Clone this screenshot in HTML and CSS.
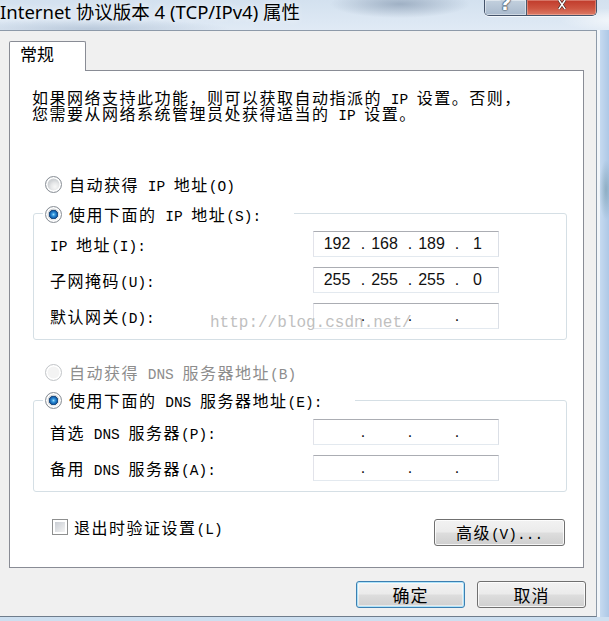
FILE: index.html
```html
<!DOCTYPE html>
<html lang="zh-CN">
<head>
<meta charset="utf-8">
<title>Internet 协议版本 4 (TCP/IPv4) 属性</title>
<link rel="stylesheet" href="styles.css">
</head>
<body>
<div class="window">
  <header class="titlebar">
    <h1 class="title">Internet 协议版本 4 (TCP/IPv4) 属性</h1>
    <div class="caption">
      <div class="cap-btn help"><span>?</span></div>
      <div class="cap-btn close">
        <svg width="22" height="10" viewBox="0 -12 22 22" aria-hidden="true">
          <path d="M4 -12 L18 8 M18 -12 L4 8" stroke="#3a2622" stroke-width="6" fill="none"/>
          <path d="M4 -12 L18 8 M18 -12 L4 8" stroke="#ffffff" stroke-width="3.4" fill="none"/>
        </svg>
      </div>
    </div>
  </header>
  <div class="frame">
    <div class="client">
      <div class="tabs"><div class="tab">常规</div></div>
      <div class="page">
        <p class="intro">如果网络支持此功能，则可以获取自动指派的<span class="m"> IP </span>设置。否则，<br>您需要从网络系统管理员处获得适当的<span class="m"> IP </span>设置。</p>

        <div class="option first"><span class="radio"></span><span>自动获得<span class="m"> IP </span>地址<span class="m">(O)</span></span></div>

        <fieldset class="group">
          <legend><span class="option"><span class="radio on"></span><span>使用下面的<span class="m"> IP </span>地址<span class="m">(S):</span></span></span></legend>
          <div class="field">
            <label><span class="m">IP </span>地址<span class="m">(I):</span></label>
            <div class="ip"><span class="oct">192</span><span class="dot">.</span><span class="oct">168</span><span class="dot">.</span><span class="oct">189</span><span class="dot">.</span><span class="oct">1</span></div>
          </div>
          <div class="field">
            <label>子网掩码<span class="m">(U):</span></label>
            <div class="ip"><span class="oct">255</span><span class="dot">.</span><span class="oct">255</span><span class="dot">.</span><span class="oct">255</span><span class="dot">.</span><span class="oct">0</span></div>
          </div>
          <div class="field">
            <label>默认网关<span class="m">(D):</span></label>
            <div class="ip"><span class="oct"></span><span class="dot">.</span><span class="oct"></span><span class="dot">.</span><span class="oct"></span><span class="dot">.</span><span class="oct"></span></div>
          </div>
        </fieldset>

        <div class="option disabled dns-auto"><span class="radio"></span><span>自动获得<span class="m"> DNS </span>服务器地址<span class="m">(B)</span></span></div>

        <fieldset class="group dns">
          <legend><span class="option"><span class="radio on"></span><span>使用下面的<span class="m"> DNS </span>服务器地址<span class="m">(E):</span></span></span></legend>
          <div class="field">
            <label>首选<span class="m"> DNS </span>服务器<span class="m">(P):</span></label>
            <div class="ip"><span class="oct"></span><span class="dot">.</span><span class="oct"></span><span class="dot">.</span><span class="oct"></span><span class="dot">.</span><span class="oct"></span></div>
          </div>
          <div class="field">
            <label>备用<span class="m"> DNS </span>服务器<span class="m">(A):</span></label>
            <div class="ip"><span class="oct"></span><span class="dot">.</span><span class="oct"></span><span class="dot">.</span><span class="oct"></span><span class="dot">.</span><span class="oct"></span></div>
          </div>
        </fieldset>

        <div class="bottom-row">
          <div class="check"><span class="checkbox"></span><span>退出时验证设置<span class="m">(L)</span></span></div>
          <button class="btn adv" type="button">高级<span class="m">(V)...</span></button>
        </div>

        <div class="watermark">http://blog.csdn.net/</div>
      </div>
      <div class="actions">
        <button class="btn default" type="button">确定</button>
        <button class="btn" type="button">取消</button>
      </div>
    </div>
    <div class="edge"></div>
  </div>
  <div class="bottom-edge"></div>
</div>
</body>
</html>
```
FILE: styles.css
```css
* { box-sizing: border-box; }
html, body { margin: 0; padding: 0; }
body {
  width: 609px;
  height: 621px;
  overflow: hidden;
  background: #c9dbee;
  font-family: "Noto Sans CJK SC", sans-serif;
  color: #000;
}
.window {
  width: 609px;
  height: 621px;
  display: flex;
  flex-direction: column;
}

/* title bar */
.titlebar {
  height: 30px;
  flex: none;
  display: flex;
  justify-content: space-between;
  align-items: flex-start;
  padding-right: 12px;
  background:
    radial-gradient(ellipse 70px 14px at 400px 4px, rgba(115,135,160,.55), transparent),
    radial-gradient(ellipse 140px 10px at 90px 29px, rgba(140,162,188,.45), transparent),
    radial-gradient(ellipse 60px 12px at 620px 20px, rgba(255,255,255,.7), transparent),
    linear-gradient(#d3e1ef, #e0eaf5);
}
.title {
  margin: 0;
  font: 400 18.5px/24px "Noto Sans", "Noto Sans CJK SC", sans-serif;
  color: #000;
  white-space: nowrap;
  text-shadow: 0 0 6px rgba(255,255,255,.9);
}
.caption {
  display: flex;
  height: 16px;
  border: 1px solid #44536a;
  border-top: 0;
  border-radius: 0 0 5px 5px;
  overflow: hidden;
  box-shadow: 0 1px 0 rgba(255,255,255,.7);
}
.cap-btn {
  height: 100%;
  display: flex;
  justify-content: center;
  align-items: flex-start;
  overflow: hidden;
}
.help {
  width: 42px;
  background: linear-gradient(#c3d0de, #a9bacd);
  border-right: 1px solid #4b5a6c;
  box-shadow: inset 0 0 0 1px rgba(255,255,255,.45);
}
.help span {
  font: 700 20px/20px "DejaVu Sans", sans-serif;
  color: #fff;
  margin-top: -7px;
  text-shadow: 0 0 1px #2c3a4a, 0 0 1px #2c3a4a, 0 0 2px #2c3a4a;
}
.close {
  width: 69px;
  background: linear-gradient(#c03a2b, #cd5541 55%, #dc7a66);
  box-shadow: inset 0 0 0 1px rgba(255,225,215,.35);
}

/* body frame */
.frame {
  display: flex;
  height: 587px;
  flex: none;
}
.client {
  width: 597px;
  height: 587px;
  flex: none;
  background: #f0f0f0;
  border-top: 1px solid #8d9aa9;
  border-right: 1px solid #8d9aa9;
  border-bottom: 1px solid #6f7d8c;
  padding: 10px 12px 0 9px;
}
.edge {
  flex: 1;
  background:
    radial-gradient(ellipse 7px 30px at 9px 160px, rgba(95,135,150,.45), transparent),
    linear-gradient(to right, #f2f6fa 0 3px, #c6daf0 3px, #adc8e6);
}
.bottom-edge {
  flex: 1;
  background: #cddff0;
}

/* tab */
.tabs { display: flex; }
.tab {
  width: 77px;
  height: 30px;
  border: 1px solid #898c95;
  border-bottom: 0;
  border-radius: 2px 2px 0 0;
  background: #fff;
  padding-left: 10px;
  font-size: 17px;
  line-height: 24px;
  position: relative;
  z-index: 1;
  margin-bottom: -1px;
}
.page {
  position: relative;
  height: 498px;
  background: #fff;
  border: 1px solid #898c95;
  padding: 18px 16px 0 22px;
  font-size: 16px;
  letter-spacing: 1.5px;
}
.m {
  font-family: "Liberation Mono", monospace;
  font-size: 14.5px;
  line-height: 10px;
  letter-spacing: 0;
  white-space: pre;
}
.intro {
  margin: 0;
  line-height: 16px;
  white-space: nowrap;
}

/* radio options */
.option {
  display: flex;
  align-items: center;
  height: 20px;
  line-height: 20px;
  white-space: nowrap;
}
.option.first { margin-top: 53px; }
.option.dns-auto { margin-top: 22px; }
.option.disabled { color: #8d8d8d; }
.radio {
  flex: none;
  width: 17px;
  height: 17px;
  margin: 0 7px 0 13px;
  border-radius: 50%;
  border: 1px solid #8a9097;
  background: radial-gradient(circle at 60% 65%, #f8f8f8 0, #e6e7e8 4px, #cfd2d5 7px);
  box-shadow: inset 0 0 0 1.5px #fff;
}
.radio.on {
  background:
    radial-gradient(circle at 50% 50%, #9fe0ff 0, #3596dc 1.6px, #1565b3 3.4px, #1b4576 4.4px, rgba(27,69,118,0) 5px),
    radial-gradient(circle at 60% 65%, #f8f8f8 0, #e6e7e8 4px, #cfd2d5 7px);
}
.disabled .radio {
  border-color: #c3c6c9;
  background: #f3f3f3;
}

/* group boxes */
.group {
  margin: 8px 0 0 1px;
  padding: 7px 0 10px 0;
  border: 1px solid #d5dfe5;
  border-radius: 3px;
  min-width: 0;
  display: flex;
  flex-direction: column;
  gap: 10px;
}
.group.dns { margin-top: 8px; }
.group legend {
  margin-left: 9px;
  padding: 2px 33px 0 2px;
}
.group.dns legend { padding-top: 0; }
.group.dns { padding-top: 9px; }
.group .radio { margin-left: 0; }
.field {
  display: grid;
  grid-template-columns: 263px 186px;
  align-items: center;
  padding-left: 16px;
  height: 26px;
  white-space: nowrap;
}
.ip {
  display: flex;
  height: 26px;
  border: 1px solid;
  border-color: #abadb3 #dbdfe6 #e3e9ef #e2e3ea;
  background: #fff;
  font: 16px/24px "Liberation Sans", sans-serif;
  letter-spacing: 0;
  color: #111;
}
.oct {
  width: 41px;
  padding-right: 4px;
  text-align: center;
}
.oct:first-child { width: 46px; padding-right: 0; }
.oct:last-child { flex: 1; padding-right: 3px; }
.dot {
  width: 6px;
  text-align: center;
}

/* bottom row */
.bottom-row {
  display: flex;
  justify-content: space-between;
  align-items: flex-start;
  margin: 27px 2px 0 20px;
}
.check {
  display: flex;
  align-items: center;
  height: 16px;
  line-height: 16px;
  white-space: nowrap;
}
.checkbox {
  flex: none;
  width: 16px;
  height: 16px;
  margin-right: 6px;
  border: 1px solid #8e8f8f;
  padding: 2px;
  background: linear-gradient(135deg, #c9cdd3, #f4f4f4) content-box, #fff;
}
.btn {
  height: 27px;
  width: 131px;
  padding: 0;
  border: 1px solid #707070;
  border-radius: 3px;
  background: linear-gradient(#f2f2f2 0%, #ebebeb 48%, #dddddd 52%, #cfcfcf 100%);
  box-shadow: inset 0 0 0 1px rgba(255,255,255,.8);
  font-family: "Noto Sans CJK SC", sans-serif;
  font-size: 16px;
  line-height: 25px;
  letter-spacing: 1.5px;
  color: #000;
  white-space: nowrap;
}
.actions {
  display: flex;
  justify-content: flex-end;
  gap: 12px;
  margin: 13px -2px 0 0;
}
.actions .btn {
  width: 109px;
  font-size: 17px;
  letter-spacing: 1px;
}
.btn.default {
  border-color: #3c7fb1;
  box-shadow: inset 0 0 0 1px #aee3fa, inset 0 0 0 2px rgba(255,255,255,.5);
}

/* watermark */
.watermark {
  position: absolute;
  left: 200px;
  top: 243px;
  font: 16px/18px "Liberation Mono", monospace;
  letter-spacing: 0;
  color: #bfbfbf;
  pointer-events: none;
  z-index: 2;
}
```
